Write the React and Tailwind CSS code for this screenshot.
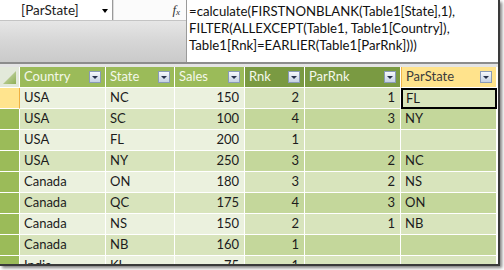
import React from 'react'

const rows = [
  ['USA', 'NC', 150, 2, 1, 'FL'],
  ['USA', 'SC', 100, 4, 3, 'NY'],
  ['USA', 'FL', 200, 1, '', ''],
  ['USA', 'NY', 250, 3, 2, 'NC'],
  ['Canada', 'ON', 180, 3, 2, 'NS'],
  ['Canada', 'QC', 175, 4, 3, 'ON'],
  ['Canada', 'NS', 150, 2, 1, 'NB'],
  ['Canada', 'NB', 160, 1, '', ''],
  ['India', 'KL', 75, 1, '', ''],
]

function Drop() {
  return (
    <span className="ml-auto flex h-[12px] w-[12px] shrink-0 items-center justify-center border border-[#8a9bb8] bg-gradient-to-b from-[#f6f8fc] to-[#c6d2e4]">
      <span className="h-0 w-0 border-x-[3px] border-t-[3px] border-x-transparent border-t-[#27314a]" />
    </span>
  )
}

function HeadCell({ label, tone }) {
  const tones = {
    base: 'bg-[#9bbb59] text-[#f4f8ea]',
    calc: 'bg-[#7a9a42] text-[#f4f8ea]',
    sel: 'bg-[#ffe38c] text-[#3c3c3c] border-l border-l-[#f2b64a]',
  }
  return (
    <div className={`flex items-center border-r border-b border-white pl-[4px] pr-[4px] ${tones[tone]}`}>
      <span>{label}</span>
      <Drop />
    </div>
  )
}

export default function App() {
  return (
    <div className="h-[270px] w-[504px] overflow-hidden bg-white [font-family:Lato,'Open_Sans',sans-serif]">
      <div className="h-[266px] w-[500px] overflow-hidden border-r-2 border-b-2 border-[#3a3a3a] shadow-[2px_2px_3px_rgba(0,0,0,0.5)]">
        {/* formula bar */}
        <div className="flex h-[62px]">
          <div className="flex w-[186px] flex-col">
            <div className="flex h-[20px]">
              <div className="relative flex w-[113px] items-center border-r border-[#9a9a9a] bg-white pl-[21px] text-[13.5px] text-[#222]">
                [ParState]
                <span className="absolute right-[4px] top-[9px] h-0 w-0 border-x-[3px] border-t-[4px] border-x-transparent border-t-black" />
              </div>
              <div className="flex flex-1 items-center justify-end border-l border-[#dcdcdc] bg-[#fbfbfb] pr-[6px] [font-family:'Liberation_Serif',serif] text-[13px] italic text-[#333]">
                f<span className="text-[9px] leading-none mt-[4px]">x</span>
              </div>
            </div>
            <div className="flex-1 border-t border-[#c4c4c4] bg-gradient-to-b from-[#e6e6e6] via-[#d6d6d6] to-[#cacaca]" />
          </div>
          <div className="flex-1 border-l border-[#9a9a9a] bg-white pl-[2px] pt-[3px] text-[13.2px] leading-[17px] text-[#111]">
            <div>=calculate(FIRSTNONBLANK(Table1[State],1),</div>
            <div>FILTER(ALLEXCEPT(Table1, Table1[Country]),</div>
            <div>Table1[Rnk]=EARLIER(Table1[ParRnk])))</div>
          </div>
        </div>
        <div className="h-[2px] bg-[#8c8c8c]" />
        <div className="h-[3px] bg-[#e4e4e4]" />

        {/* table */}
        <div className="grid grid-cols-[20px_86px_69px_70px_60px_96px_96px] auto-rows-[21px] text-[13px]">
          <div className="relative border-r border-b border-white bg-[#e3e9da]">
            <svg className="absolute bottom-[3px] right-[3px]" width="13" height="13" viewBox="0 0 13 13">
              <defs>
                <linearGradient id="tri" x1="0" y1="0" x2="1" y2="1">
                  <stop offset="0" stopColor="#d6e2c0" />
                  <stop offset="1" stopColor="#8fae55" />
                </linearGradient>
              </defs>
              <polygon points="13,0 13,13 0,13" fill="url(#tri)" />
            </svg>
          </div>
          <HeadCell label="Country" tone="base" />
          <HeadCell label="State" tone="base" />
          <HeadCell label="Sales" tone="base" />
          <HeadCell label="Rnk" tone="calc" />
          <HeadCell label="ParRnk" tone="calc" />
          <HeadCell label="ParState" tone="sel" />

          {rows.map((r, i) => {
            const odd = i % 2 === 0
            const base = odd ? 'bg-[#ebf1de]' : 'bg-[#d8e4bc]'
            const calc = odd ? 'bg-[#d8e4bc]' : 'bg-[#c4d79b]'
            const cell = 'flex items-center border-r border-b border-white text-[#1c1c1c]'
            return (
              <React.Fragment key={i}>
                <div
                  className={
                    i === 0
                      ? 'border-b border-r border-r-[#f0b040] border-b-white bg-[#ffe48e]'
                      : 'border-r border-b border-white bg-[#9bbb59]'
                  }
                />
                <div className={`${cell} ${base} pl-[4px]`}>{r[0]}</div>
                <div className={`${cell} ${base} pl-[4px]`}>{r[1]}</div>
                <div className={`${cell} ${base} justify-end pr-[5px]`}>{r[2]}</div>
                <div className={`${cell} ${calc} justify-end pr-[5px]`}>{r[3]}</div>
                <div className={`${cell} ${calc} justify-end pr-[5px]`}>{r[4]}</div>
                <div
                  className={
                    i === 0
                      ? `flex items-center border-2 border-black ${calc} pl-[3px] text-[#1c1c1c]`
                      : `${cell} ${calc} pl-[4px]`
                  }
                >
                  {r[5]}
                </div>
              </React.Fragment>
            )
          })}
        </div>
      </div>
    </div>
  )
}
